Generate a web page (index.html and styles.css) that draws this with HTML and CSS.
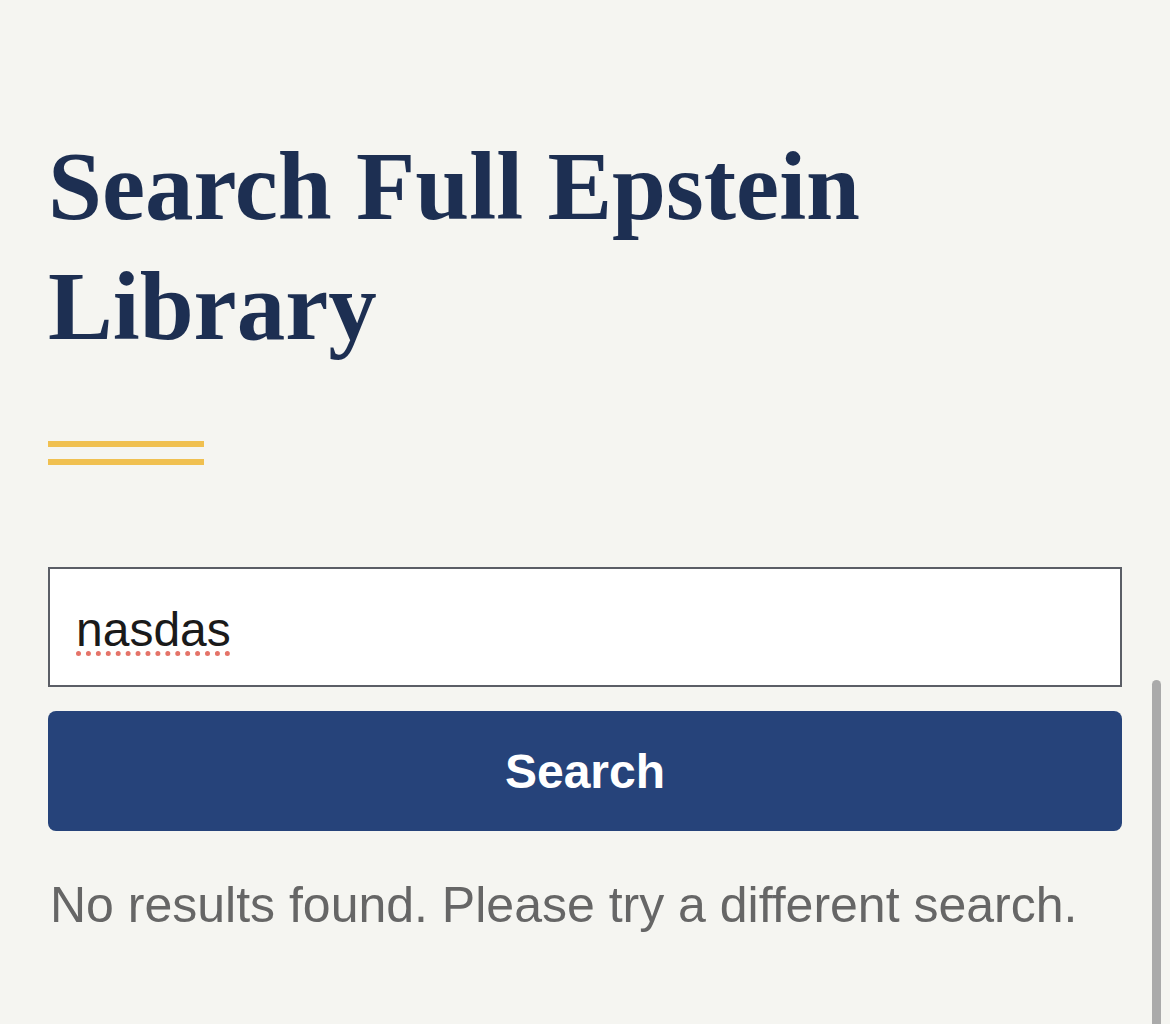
FILE: index.html
```html
<!DOCTYPE html>
<html lang="en">
<head>
<meta charset="utf-8">
<title>Search Full Epstein Library</title>
<link rel="stylesheet" href="styles.css">
</head>
<body>
<main class="page">
  <h1 class="title">Search Full Epstein Library</h1>
  <div class="rule"><span></span><span></span></div>
  <form class="search">
    <div class="field"><span class="query">nasdas</span></div>
    <button type="button" class="btn">Search</button>
  </form>
  <p class="msg">No results found. Please try a different search.</p>
</main>
<div class="scrollbar"></div>
</body>
</html>
```

FILE: styles.css
```css
html, body {
  margin: 0;
  padding: 0;
  background: #f5f5f1;
  height: 100%;
  overflow: hidden;
}
.page {
  padding: 127px 48px 0 48px;
  display: flex;
  flex-direction: column;
}
.title {
  margin: 0;
  font-family: "Liberation Serif", "DejaVu Serif", serif;
  font-weight: 700;
  font-size: 97px;
  line-height: 120px;
  color: #1d2f52;
  max-width: 900px;
}
.rule {
  margin-top: 74px;
  width: 156px;
  display: flex;
  flex-direction: column;
  gap: 12px;
}
.rule span {
  display: block;
  height: 6px;
  background: #f0c050;
}
.search {
  margin-top: 102px;
  display: flex;
  flex-direction: column;
  gap: 24px;
}
.field {
  height: 120px;
  box-sizing: border-box;
  border: 2px solid #5b5e66;
  background: #fff;
  display: flex;
  align-items: center;
  padding-left: 26px;
  padding-top: 4px;
}
.query {
  font-family: "Liberation Sans", Arial, sans-serif;
  font-size: 48px;
  color: #1a1a1a;
  text-decoration: underline dotted #e57368;
  text-decoration-thickness: 5px;
  text-underline-offset: 5px;
}
.btn {
  height: 120px;
  border: none;
  border-radius: 8px;
  background: #26437a;
  color: #fff;
  font-family: "Liberation Sans", Arial, sans-serif;
  font-weight: 700;
  font-size: 48px;
  padding: 0;
}
.msg {
  margin: 45px 0 0 2px;
  font-family: "Liberation Sans", Arial, sans-serif;
  font-size: 50px;
  color: #666;
}
.scrollbar {
  position: absolute;
  left: 1152px;
  top: 680px;
  width: 9px;
  height: 360px;
  border-radius: 5px;
  background: #aaa;
}
```
